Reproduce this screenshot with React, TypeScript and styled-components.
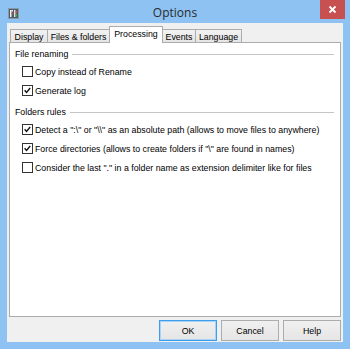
import React from 'react';
import styled, { createGlobalStyle } from 'styled-components';

const GlobalStyle = createGlobalStyle`
  html, body {
    margin: 0;
    padding: 0;
  }
  body {
    font-family: "Liberation Sans", Arial, sans-serif;
    font-size: 8.8px;
    color: #000;
  }
`;

const tabs = [
  { label: 'Display', width: 38 },
  { label: 'Files & folders', width: 63 },
  { label: 'Processing', width: 54, active: true },
  { label: 'Events', width: 34 },
  { label: 'Language', width: 47 },
];

const groups = [
  {
    title: 'File renaming',
    items: [
      { label: 'Copy instead of Rename', checked: false },
      { label: 'Generate log', checked: true },
    ],
  },
  {
    title: 'Folders rules',
    items: [
      { label: 'Detect a ":\\" or "\\\\" as an absolute path (allows to move files to anywhere)', checked: true },
      { label: 'Force directories (allows to create folders if "\\" are found in names)', checked: true },
      { label: 'Consider the last "." in a folder name as extension delimiter like for files', checked: false },
    ],
  },
];

export default function App() {
  return (
    <>
      <GlobalStyle />
      <Frame>
        <TitleBar>
          <AppIcon viewBox="0 0 11 11" width="11" height="11">
            <rect x="0.5" y="0.5" width="10" height="10" fill="#4d5d6e" stroke="#8a97a4" />
            <rect x="2" y="2" width="1.5" height="7" fill="#f2f2f2" />
            <rect x="3.5" y="2" width="1.5" height="1.5" fill="#f2f2f2" />
            <rect x="3.5" y="5" width="1.5" height="1.5" fill="#e04040" />
            <rect x="6" y="2" width="1.5" height="7" fill="#e2e2e2" />
            <rect x="7.5" y="3" width="1.5" height="2" fill="#e84a3a" />
            <rect x="7.5" y="6" width="1.5" height="2.5" fill="#3cb043" />
          </AppIcon>
          <Title>Options</Title>
          <CloseButton>
            <svg viewBox="0 0 9 9" width="9" height="9">
              <path d="M1.5 1.5 L7.5 7.5 M7.5 1.5 L1.5 7.5" stroke="#fff" strokeWidth="1.8" />
            </svg>
          </CloseButton>
        </TitleBar>
        <Client>
          <TabRow>
            {tabs.map((t) => (
              <Tab key={t.label} $width={t.width} $active={!!t.active}>
                {t.label}
              </Tab>
            ))}
          </TabRow>
          <Panel>
            {groups.map((g, gi) => (
              <Group key={g.title} $first={gi === 0}>
                <GroupHeader>
                  <span>{g.title}</span>
                  <GroupLine />
                </GroupHeader>
                {g.items.map((it) => (
                  <CheckRow key={it.label}>
                    <Box>
                      {it.checked && (
                        <svg viewBox="0 0 11 11" width="11" height="11">
                          <path d="M2 5.3 L4.3 7.8 L8.8 2.4" fill="none" stroke="#111" strokeWidth="1.7" />
                        </svg>
                      )}
                    </Box>
                    <span>{it.label}</span>
                  </CheckRow>
                ))}
              </Group>
            ))}
          </Panel>
          <ButtonRow>
            <Button $default>OK</Button>
            <Button>Cancel</Button>
            <Button>Help</Button>
          </ButtonRow>
        </Client>
      </Frame>
    </>
  );
}

const Frame = styled.div`
  width: 350px;
  height: 349px;
  box-sizing: border-box;
  padding: 0 7px 7px;
  background: #8dc2f2;
  display: flex;
  flex-direction: column;
`;

const TitleBar = styled.div`
  height: 23px;
  display: grid;
  grid-template-columns: 1fr auto 1fr;
  align-items: start;
`;

const AppIcon = styled.svg`
  margin: 8px 0 0 1px;
  display: block;
`;

const Title = styled.div`
  font-family: "Open Sans", "Noto Sans", sans-serif;
  font-size: 12px;
  color: #2a2a2a;
  line-height: 26px;
`;

const CloseButton = styled.div`
  justify-self: end;
  width: 25px;
  height: 19px;
  margin-right: -2px;
  background: #c75050;
  display: flex;
  align-items: center;
  justify-content: center;
`;

const Client = styled.div`
  flex: 1;
  background: #f0f0f0;
  display: flex;
  flex-direction: column;
  padding: 3px 2px 1px;
  min-height: 0;
`;

const TabRow = styled.div`
  height: 16px;
  display: flex;
  align-items: flex-end;
  padding-left: 1px;
  position: relative;
  z-index: 1;
`;

const Tab = styled.div<{ $width: number; $active: boolean }>`
  box-sizing: border-box;
  width: ${(p) => p.$width}px;
  height: ${(p) => (p.$active ? 17 : 13)}px;
  margin-bottom: ${(p) => (p.$active ? -1 : 0)}px;
  margin-left: -1px;
  &:first-child {
    margin-left: 0;
  }
  border: 1px solid #acacac;
  border-bottom: none;
  background: ${(p) => (p.$active ? '#fff' : 'linear-gradient(#f2f2f2, #e5e5e5)')};
  z-index: ${(p) => (p.$active ? 2 : 1)};
  display: flex;
  align-items: center;
  justify-content: center;
  padding-top: ${(p) => (p.$active ? 0 : 1)}px;
  padding-bottom: ${(p) => (p.$active ? 3 : 0)}px;
  white-space: nowrap;
`;

const Panel = styled.div`
  flex: 1;
  background: #fff;
  border: 1px solid #acacac;
  padding: 2px 6px 0 5px;
`;

const Group = styled.div<{ $first: boolean }>`
  margin-top: ${(p) => (p.$first ? 0 : 3)}px;
`;

const GroupHeader = styled.div`
  height: 17px;
  display: flex;
  align-items: center;
  gap: 4px;
`;

const GroupLine = styled.div`
  flex: 1;
  height: 1px;
  background: #c4c4c4;
  margin-top: 1px;
`;

const CheckRow = styled.div`
  height: 19px;
  display: flex;
  align-items: center;
  gap: 2px;
  padding-left: 7px;
  white-space: nowrap;
`;

const Box = styled.div`
  box-sizing: border-box;
  width: 11px;
  height: 11px;
  border: 1px solid #333;
  background: #fff;
  display: flex;
  align-items: center;
  justify-content: center;
  svg {
    display: block;
  }
`;

const ButtonRow = styled.div`
  display: flex;
  justify-content: flex-end;
  gap: 4px;
  margin-top: 3px;
`;

const Button = styled.div<{ $default?: boolean }>`
  box-sizing: border-box;
  width: 58px;
  height: 21px;
  border: 1px solid ${(p) => (p.$default ? '#3c9ded' : '#acacac')};
  box-shadow: ${(p) => (p.$default ? 'inset 0 0 0 1px #a9d2f5' : 'none')};
  background: linear-gradient(#f0f0f0, #e5e5e5);
  display: flex;
  align-items: center;
  justify-content: center;
`;
